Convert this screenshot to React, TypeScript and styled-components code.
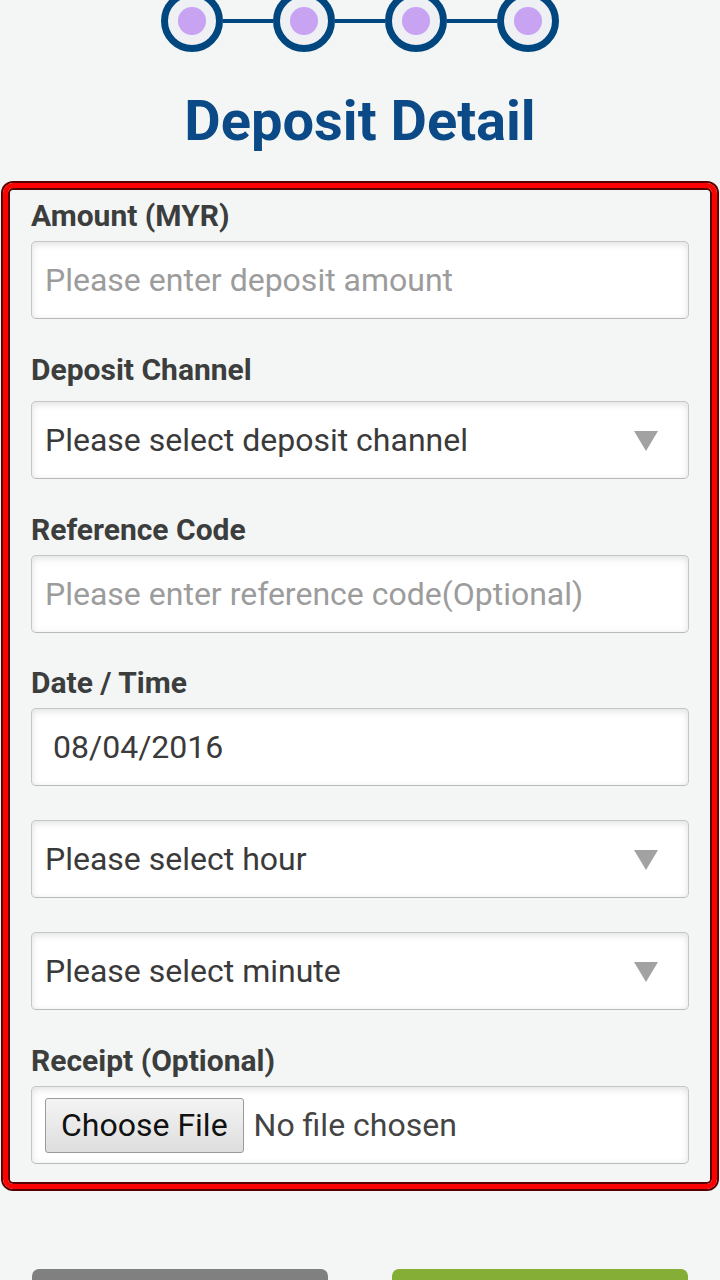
import React from 'react';
import styled, { createGlobalStyle } from 'styled-components';

const GlobalStyle = createGlobalStyle`
  html, body {
    margin: 0;
    padding: 0;
    background: #f3f6f5;
    font-family: Roboto, "Noto Sans", "Liberation Sans", sans-serif;
  }
  body {
    width: 720px;
    height: 1280px;
    overflow: hidden;
  }
`;

const Page = styled.div`
  width: 720px;
  height: 1280px;
  overflow: hidden;
  background: #f3f6f5;
`;

const Stepper = styled.div`
  display: flex;
  justify-content: center;
  align-items: center;
  margin-top: -10px;
`;

const Step = styled.div`
  width: 48px;
  height: 48px;
  border: 7px solid #00467f;
  border-radius: 50%;
  background: #eef0f3;
  display: flex;
  align-items: center;
  justify-content: center;

  &::after {
    content: '';
    width: 28px;
    height: 28px;
    border-radius: 50%;
    background: #c7a3f1;
  }
`;

const Link = styled.div`
  width: 50px;
  height: 4px;
  background: #00467f;
`;

const Title = styled.h1`
  margin: 31px 0 0;
  text-align: center;
  font-size: 56px;
  line-height: 76px;
  font-weight: 700;
  color: #0b4a86;
`;

const Frame = styled.div`
  margin: 24px 3px 0;
  border: 5px solid #ff0000;
  border-radius: 10px;
  box-shadow: 0 0 0 2px #560000, inset 0 0 0 2px #560000;
  padding: 12px 23px 20px;
`;

const Field = styled.div<{ $gap?: number }>`
  display: flex;
  flex-direction: column;
  margin-bottom: ${(p) => p.$gap ?? 35}px;

  &:last-child {
    margin-bottom: 0;
  }
`;

const Label = styled.label`
  font-size: 30px;
  line-height: 32px;
  font-weight: 700;
  color: #3c3d3d;
  margin-bottom: 9px;
`;

const Box = styled.div<{ $pad?: number; $top?: number; $muted?: boolean }>`
  position: relative;
  height: 76px;
  margin-top: ${(p) => p.$top ?? 0}px;
  border: 1px solid #c4c6c6;
  border-bottom-color: #b9bbbb;
  border-radius: 5px;
  background: #fff;
  box-shadow: inset 0 2px 7px rgba(0, 0, 0, 0.13);
  display: flex;
  align-items: center;
  padding-left: ${(p) => p.$pad ?? 13}px;
  font-size: 32px;
  color: ${(p) => (p.$muted ? '#9c9c9c' : '#3a3a3a')};
  box-sizing: content-box;
`;

const Arrow = styled.span`
  position: absolute;
  right: 30px;
  top: 29px;
  width: 0;
  height: 0;
  border-left: 12px solid transparent;
  border-right: 12px solid transparent;
  border-top: 20px solid #a2a2a2;
`;

const FileButton = styled.span`
  height: 53px;
  padding: 0 15px;
  display: flex;
  align-items: center;
  border: 1px solid #9a9a9a;
  border-radius: 3px;
  background: linear-gradient(#f4f4f4, #dedede);
  color: #111;
  font-size: 32px;
`;

const FileName = styled.span`
  margin-left: 10px;
  color: #444;
`;

const Actions = styled.div`
  display: flex;
  justify-content: space-between;
  padding: 0 32px;
  margin-top: 80px;
`;

const Action = styled.div<{ $tone: string }>`
  width: 296px;
  height: 60px;
  border-radius: 7px;
  background: ${(p) => p.$tone};
`;

const Select = ({ text, top }: { text: string; top?: number }) => (
  <Box $top={top}>
    {text}
    <Arrow />
  </Box>
);

export default function App() {
  return (
    <Page>
      <GlobalStyle />
      <Stepper>
        <Step />
        <Link />
        <Step />
        <Link />
        <Step />
        <Link />
        <Step />
      </Stepper>
      <Title>Deposit Detail</Title>
      <Frame>
        <Field>
          <Label>Amount (MYR)</Label>
          <Box $muted>Please enter deposit amount</Box>
        </Field>
        <Field>
          <Label>Deposit Channel</Label>
          <Select text="Please select deposit channel" top={6} />
        </Field>
        <Field $gap={34}>
          <Label>Reference Code</Label>
          <Box $muted>Please enter reference code(Optional)</Box>
        </Field>
        <Field $gap={34}>
          <Label>Date / Time</Label>
          <Box $pad={21}>08/04/2016</Box>
        </Field>
        <Field $gap={34}>
          <Select text="Please select hour" />
        </Field>
        <Field>
          <Select text="Please select minute" />
        </Field>
        <Field>
          <Label>Receipt (Optional)</Label>
          <Box>
            <FileButton>Choose File</FileButton>
            <FileName>No file chosen</FileName>
          </Box>
        </Field>
      </Frame>
      <Actions>
        <Action $tone="#808080" />
        <Action $tone="#84ae36" />
      </Actions>
    </Page>
  );
}
